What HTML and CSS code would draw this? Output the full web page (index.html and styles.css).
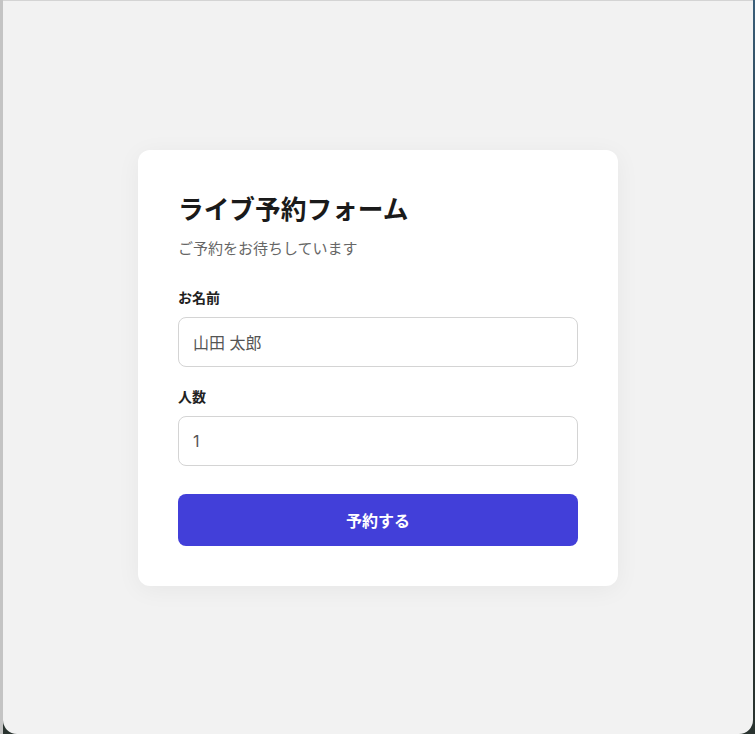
FILE: index.html
```html
<!DOCTYPE html>
<html lang="ja">
<head>
<meta charset="utf-8">
<title>ライブ予約フォーム</title>
<link rel="stylesheet" href="styles.css">
</head>
<body>
<div class="window">
  <form class="card">
    <h1 class="title">ライブ予約フォーム</h1>
    <p class="subtitle">ご予約をお待ちしています</p>
    <div class="field">
      <label class="label" for="name">お名前</label>
      <input class="input" id="name" type="text" value="山田 太郎">
    </div>
    <div class="field">
      <label class="label" for="count">人数</label>
      <input class="input" id="count" type="text" value="1">
    </div>
    <button class="button" type="button">予約する</button>
  </form>
</div>
</body>
</html>
```

FILE: styles.css
```css
html, body {
  margin: 0;
  padding: 0;
  height: 100%;
}
body {
  background: linear-gradient(to right, #c4c4c4 0, #c4c4c4 3px, transparent 3px),
              linear-gradient(to bottom, #3b5f7a 0, #1d2a2a 40%, #2a3430 100%);
  font-family: "Inter", "Noto Sans CJK JP", sans-serif;
  overflow: hidden;
}
.window {
  box-sizing: border-box;
  margin-left: 3px;
  width: 750px;
  height: 734px;
  padding-top: 1px;
  background: #f2f2f2;
  border-top: 1px solid #d4d4d4;
  border-radius: 0 0 14px 14px;
  display: flex;
  align-items: center;
  justify-content: center;
}
.card {
  box-sizing: border-box;
  width: 480px;
  background: #ffffff;
  border-radius: 12px;
  box-shadow: 0 4px 24px rgba(0, 0, 0, 0.05);
  padding: 40px;
  display: flex;
  flex-direction: column;
}
.title {
  margin: 0;
  padding-top: 1px;
  font-size: 25.7px;
  line-height: 37px;
  font-weight: 700;
  color: #1a1a1a;
}
.subtitle {
  margin: 10px 0 0;
  font-size: 15px;
  line-height: 22px;
  color: #666666;
}
.field {
  display: flex;
  flex-direction: column;
  margin-top: 20px;
}
.subtitle + .field {
  margin-top: 28px;
}
.label {
  font-size: 14px;
  line-height: 20px;
  font-weight: 700;
  color: #222222;
  margin-bottom: 9px;
}
.input {
  box-sizing: border-box;
  height: 50px;
  width: 100%;
  border: 1px solid #d4d4d4;
  border-radius: 8px;
  padding: 0 14px;
  font-family: inherit;
  font-size: 16px;
  color: #555555;
  background: #ffffff;
  outline: none;
}
.button {
  margin-top: 28px;
  height: 52px;
  border: none;
  border-radius: 8px;
  background: #423fd9;
  color: #ffffff;
  font-family: inherit;
  font-size: 16px;
  font-weight: 700;
  cursor: pointer;
}
```
